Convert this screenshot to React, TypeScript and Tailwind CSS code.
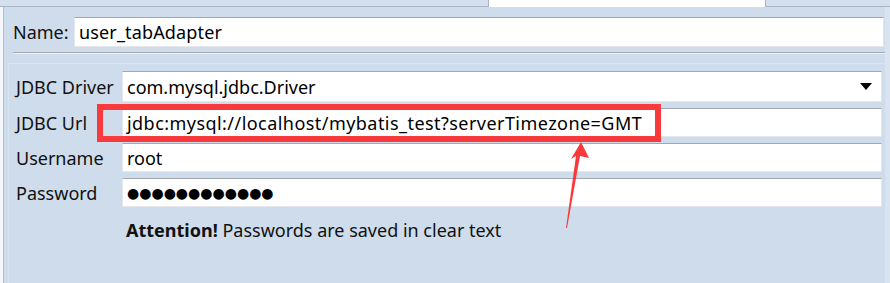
import React from "react";

const fieldCls =
  "flex items-center h-[29px] bg-white border-t border-t-[#a3a7ae] border-x border-b border-x-[#e4e8ee] border-b-[#e4e8ee] pl-[4px] text-black";

function Row({ label, children }: { label: string; children: React.ReactNode }) {
  return (
    <div className="flex items-center">
      <div className="w-[106px] shrink-0 text-[#111]">{label}</div>
      <div className="flex-1">{children}</div>
    </div>
  );
}

export default function App() {
  return (
    <div className="relative w-[890px] h-[283px] overflow-hidden bg-[#cedcec] font-['Noto_Sans',sans-serif] text-[18px] leading-none">
      {/* tab strip */}
      <div className="flex h-[7px]">
        <div className="w-[489px] bg-[#d4e0ee] border-r border-b border-[#a9b3c2]" />
        <div className="flex-1 bg-white" />
        <div className="w-[125px] bg-[#d4e0ee] border-l border-b border-[#a9b3c2]" />
      </div>

      <div className="flex h-[276px]">
        <div className="w-[3px] bg-[#f4f7fb]" />
        <div className="w-[1px] bg-[#b4bdc9]" />

        <div className="flex-1 flex flex-col">
          {/* name */}
          <div className="flex items-center pt-[10px] pl-[9px] pr-[1px]">
            <span className="w-[61px] shrink-0 text-[#111]">Name:</span>
            <div className={fieldCls + " flex-1 h-[30px] tracking-[0.15px]"}>user_tabAdapter</div>
          </div>
          <div className="mt-[5px] ml-[9px] mr-0 h-[2px] border-t border-[#a4a8ae] bg-[#eef2f7]" />

          {/* connection group */}
          <div className="flex-1 mt-[9px] ml-[4px] border-l border-t border-[#d9e4f1] pl-[7px] pr-[3px] pt-[7px]">
            <div className="flex flex-col gap-[6px]">
              <Row label="JDBC Driver">
                <div className={fieldCls + " h-[31px] justify-between pr-[9px]"}>
                  <span>com.mysql.jdbc.Driver</span>
                  <svg width="12" height="7" viewBox="0 0 12 7">
                    <path d="M0 0 L12 0 L6 7 Z" fill="#000" />
                  </svg>
                </div>
              </Row>
              <Row label="JDBC Url">
                <div className={fieldCls + " tracking-[0.45px]"}>
                  jdbc:mysql://localhost/mybatis_test?serverTimezone=GMT
                </div>
              </Row>
              <Row label="Username">
                <div className={fieldCls}>root</div>
              </Row>
              <Row label="Password">
                <div className={fieldCls + " font-['DejaVu_Sans',sans-serif] text-[14px] tracking-[0px]"}>
                  ●●●●●●●●●●●●
                </div>
              </Row>
            </div>
            <div className="mt-[14px] pl-[110px] text-[#111]">
              <span className="font-bold">Attention!</span> Passwords are saved in clear text
            </div>
          </div>
        </div>

        <div className="w-[5px] bg-[#d9e4f0]" />
      </div>

      {/* annotation */}
      <div className="absolute left-[97px] top-[104px] w-[564px] h-[38px] border-[6px] border-[#f83a3c]" />
      <svg className="absolute left-0 top-0" width="890" height="283" viewBox="0 0 890 283">
        <polygon
          points="581,142 589,158 580,156 567,228 566,228 576,156 571,159"
          fill="#f83a3c"
        />
      </svg>
    </div>
  );
}
